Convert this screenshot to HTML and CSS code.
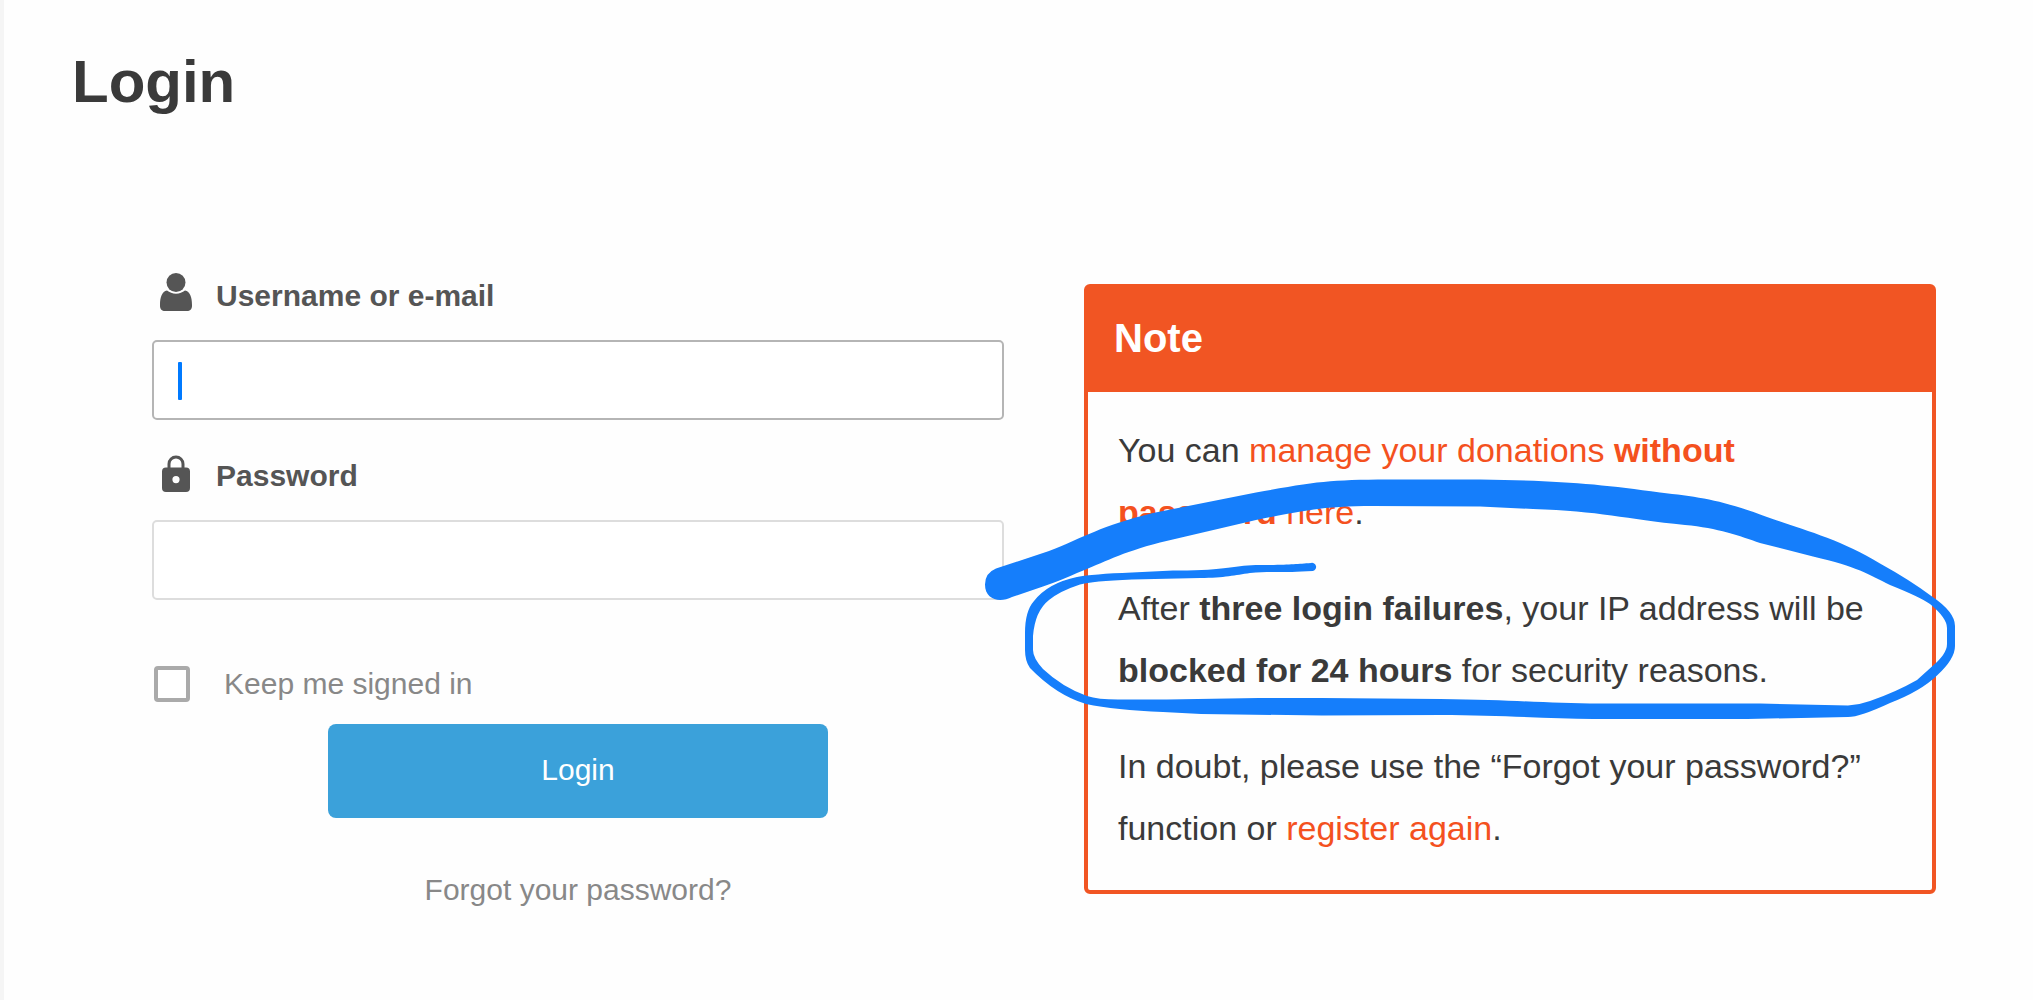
FILE: index.html
```html
<!DOCTYPE html>
<html lang="en">
<head>
    <meta charset="utf-8">
    <title>Login</title>
    <link rel="stylesheet" href="styles.css">
</head>
<body>

    <h1>Login</h1>

    <div class="columns">
        <form class="login-form">
            <label class="field-label" for="username">
                <svg class="icon" viewBox="0 0 40 46" aria-hidden="true">
                    <path d="M11 17.500C6 18.500 4 24 4 32v1c0 3 2 5 5 5h22c3 0 5-2 5-5v-1c0-8-2-13.500-7-14.500-2.500 2-5.500 3.200-9 3.200s-6.500-1.200-9-3.200z"/>
                    <circle cx="20" cy="9.500" r="9.500"/>
                </svg>
                Username or e-mail
            </label>
            <div class="field focused">
                <input type="text" id="username" name="username">
            </div>

            <label class="field-label" for="password">
                <svg class="icon" viewBox="0 0 40 46" aria-hidden="true">
                    <path fill-rule="evenodd" d="M11.500 14.500V11a8.500 8.500 0 0 1 17 0v3.500H30a4 4 0 0 1 4 4V35a4 4 0 0 1-4 4H10a4 4 0 0 1-4-4V18.500a4 4 0 0 1 4-4zM14.500 14.500h11V11a5.500 5.500 0 0 0-11 0zM20 23a3.600 3.600 0 1 0 0 7.200a3.600 3.600 0 1 0 0-7.200z"/>
                </svg>
                Password
            </label>
            <div class="field">
                <input type="password" id="password" name="password">
            </div>

            <div class="remember">
                <input type="checkbox" id="remember" name="remember">
                <label for="remember">Keep me signed in</label>
            </div>

            <button type="submit">Login</button>
            <a class="forgot" href="#forgot">Forgot your password?</a>
        </form>

        <div class="note">
            <h2>Note</h2>
            <div class="note-body">
                <p>You can <a href="#donations">manage your donations <b>without password</b> here</a>.</p>
                <p>After <b>three login failures</b>, your IP address will be <b>blocked for 24 hours</b> for security reasons.</p>
                <p>In doubt, please use the “Forgot your password?” function or <a href="#register">register again</a>.</p>
            </div>

            <!-- hand drawn loop around the second paragraph -->
            <svg class="marker" viewBox="970 460 1000 270" aria-hidden="true">
                <path d="M996 568.500 L1049 551 C1085 537 1100 526 1153 513 L1256 492.500 C1320 481 1330 479.500 1400 479.500
                    L1480 479.500 C1560 480.500 1600 484 1660 492.500 C1700 497 1722 500 1767 517 C1800 529 1840 539 1880 563.500
                    Q1910 580 1932 596.500 Q1955 612 1955 626 L1955 646 Q1955 659 1937 675.500
                    Q1921 691 1890 703 Q1860 717 1848 717 L1747 719 L1593 719 C1550 719 1500 715 1440 715 L1322 715.500 L1201 714 L1163 712
                    Q1115 710 1086 704 Q1056 695 1030 668 Q1025 661 1025 650 L1025 633 Q1025 611 1034 601 Q1048 583 1077 577
                    Q1092 574 1132 572.500 L1173 570.500 C1225 571 1235 565 1260 565 C1290 565 1296 564 1311 563
                    A4 4 0 0 1 1313 571 C1280 573 1270 571 1250 573 C1235 575 1225 578 1200 578 L1132 579.500
                    Q1092 581 1080 584.500 Q1060 591 1049 600 Q1035 611 1033 636 L1033 650 Q1033 658 1043 669
                    Q1062 687 1087 696 Q1098 699.500 1118 699.500 L1167 699.500 L1259 698 L1322 698 L1440 699
                    C1520 700 1550 703.500 1600 703.500 L1760 703.500 L1848 705.500 Q1859 705 1870 701 Q1896 692 1917 680 L1932 666.500
                    Q1947 654 1947 644 L1947 628 Q1947 618 1930 604 Q1920 597 1890 585 C1868 574 1858 567 1813 556.500
                    L1760 543 C1740 536 1718 528 1685 525 C1625 519 1600 511 1533 509 L1480 506.500 L1373 506
                    C1330 506 1310 509 1256 520 L1160 542.500 C1120 553 1105 562 1077 573 Q1062 580 1043 586.500 L1012 597
                    C1000 603 985 600 985 584.500 Q985 573 996 568.500 Z"/>
            </svg>
        </div>
    </div>

</body>
</html>
```
FILE: styles.css
```css
* {
    box-sizing: border-box;
}

body {
    margin: 0;
    min-height: 100vh;
    padding-top: 46px;
    border-left: 4px solid #f5f5f5;
    background-color: #fefefe;
    font-family: "Liberation Sans", Arial, sans-serif;
    font-size: 30px;
    color: #3a3a3a;
}

h1 {
    margin: 0 68px 122px;
    font-size: 60px;
    line-height: 72px;
}

.columns {
    display: grid;
    grid-template-columns: 1fr 1fr;
    align-items: start;
    gap: 80px;
    padding: 0 97px 0 148px;
}

.login-form {
    display: flex;
    flex-direction: column;
}

.field-label {
    display: flex;
    align-items: center;
    gap: 20px;
    padding: 30px 4px 18px;
    height: 100px;
    font-weight: bold;
    color: #555;
}

.icon {
    width: 40px;
    height: 46px;
    fill: #555;
}

.field {
    position: relative;
}

.field input {
    display: block;
    width: 100%;
    height: 80px;
    padding: 0 24px;
    border: 2px solid #ddd;
    border-radius: 5px;
    background-color: #fff;
    font: inherit;
    color: #555;
    outline: none;
}

.focused input {
    border-color: #b5b5b5;
}

/* text cursor */
.focused::after {
    content: "";
    position: absolute;
    top: 22px;
    left: 26px;
    width: 4px;
    height: 38px;
    border-radius: 1px;
    background-color: #007aff;
}

.remember {
    display: flex;
    align-items: center;
    gap: 34px;
    height: 44px;
    margin: 62px 2px 18px;
    color: #888;
}

.remember input {
    appearance: none;
    width: 36px;
    height: 36px;
    margin: 0;
    border: 4px solid #aaa;
    border-radius: 4px;
    background-color: #fff;
}

button {
    align-self: center;
    width: 100%;
    max-width: 500px;
    height: 94px;
    padding: 0 0 2px;
    border: none;
    border-radius: 8px;
    background-color: #3ba1da;
    color: #fff;
    font: inherit;
    cursor: pointer;
}

.forgot {
    align-self: center;
    margin-top: 55px;
    color: #888;
    text-decoration: none;
}

.note {
    position: relative;
    margin-top: 44px;
    border: 4px solid #f15523;
    border-radius: 6px;
}

.note h2 {
    margin: 0;
    padding: 24px 26px 28px;
    background-color: #f15523;
    color: #fff;
    font-size: 40px;
    line-height: 52px;
}

.note-body {
    padding: 27px 40px 31px 30px;
    font-size: 34px;
    line-height: 62px;
}

.note-body p {
    margin: 0 0 34px;
}

.note-body p:last-child {
    margin-bottom: 0;
}

.note-body a {
    color: #f4511e;
    text-decoration: none;
}

.marker {
    position: absolute;
    top: 172px;
    left: -118px;
    width: 1000px;
    height: 270px;
    fill: #157efb;
    pointer-events: none;
}
```
